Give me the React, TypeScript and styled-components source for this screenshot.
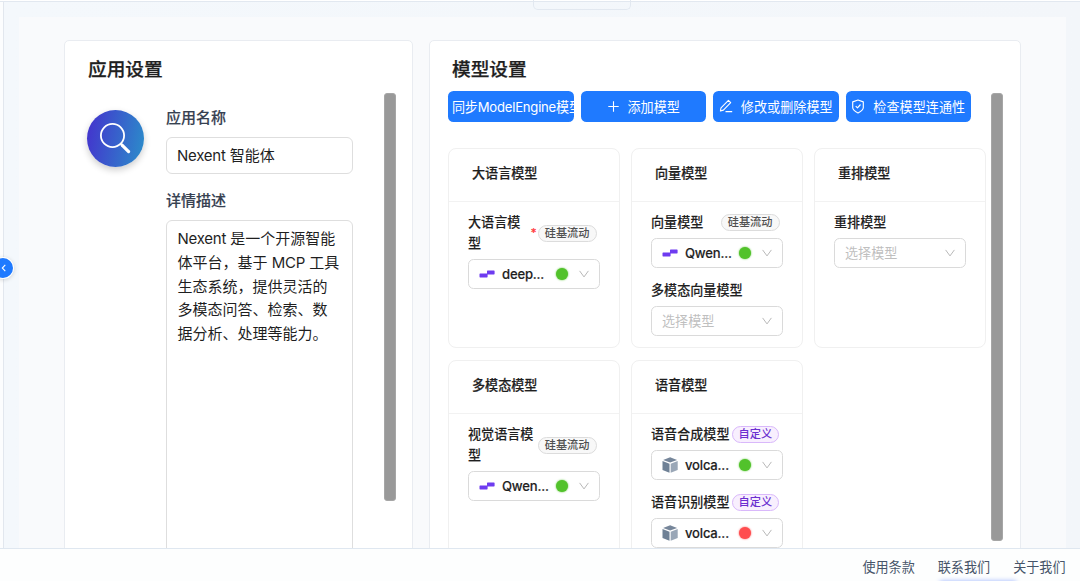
import React from "react";
import styled, { createGlobalStyle } from "styled-components";

const GlobalStyle = createGlobalStyle`
  * { box-sizing: border-box; }
  body {
    margin: 0;
    overflow: hidden;
    font-family: Inter, "Noto Sans CJK SC", sans-serif;
    color: #1f1f1f;
    background: #fff;
  }
`;

const Page = styled.div`
  position: relative;
  width: 1080px;
  height: 581px;
  display: flex;
  flex-direction: column;
  overflow: hidden;
  background: #fff;
`;

const TopEdge = styled.div`
  flex: none;
  height: 2px;
  border-bottom: 1px solid #e2e8f0;
`;

const Workspace = styled.div`
  flex: 1;
  min-height: 0;
  display: flex;
`;

const Rail = styled.aside`
  flex: none;
  width: 4px;
  background: #fcfdfe;
  border-right: 1px solid #e2e7ee;
`;

const Backdrop = styled.main`
  flex: 1;
  min-width: 0;
  padding: 15px 14px 0 15px;
  background: linear-gradient(90deg, #f4f8fc, #f3f6fa);
  overflow: hidden;
`;

const Content = styled.div`
  height: 531px;
  padding: 23px 45px 0 45px;
  display: flex;
  gap: 16px;
  background: #f9fafc;
  overflow: hidden;
`;

const Panel = styled.section<{ $width: number; $pad: number }>`
  flex: none;
  width: ${(p) => p.$width}px;
  height: 560px;
  padding: 0 0 0 ${(p) => p.$pad}px;
  border: 1px solid #e9ecf1;
  border-radius: 5px;
  background: #fff;
  display: flex;
`;

const PanelMain = styled.div<{ $width: number }>`
  flex: none;
  width: ${(p) => p.$width}px;
`;

const PanelTitle = styled.h2<{ $indent?: number }>`
  margin: 15px 0 0 ${(p) => p.$indent ?? 0}px;
  font-size: 18.7px;
  line-height: 28px;
  font-weight: 500;
  -webkit-text-stroke: 0.25px currentColor;
`;

const ScrollThumb = styled.div<{ $left: number; $height: number }>`
  flex: none;
  margin: 52px 0 0 ${(p) => p.$left}px;
  width: 12px;
  height: ${(p) => p.$height}px;
  border-radius: 3px;
  border: 1px solid #a6a6a6;
  background: #999;
`;

const AppRow = styled.div`
  margin-top: 22px;
  display: flex;
  gap: 22px;
`;

const Avatar = styled.div`
  flex: none;
  margin-top: 4px;
  width: 57px;
  height: 57px;
  border-radius: 50%;
  background: linear-gradient(100deg, #4335cd 5%, #2c8aca 95%);
  box-shadow: 0 3px 7px rgba(0, 0, 0, 0.2);
`;

const Fields = styled.div`
  width: 187px;
`;

const FieldLabel = styled.label`
  display: block;
  height: 24px;
  font-size: 15px;
  line-height: 24px;
  font-weight: 500;
  color: #374151;
  -webkit-text-stroke: 0.15px currentColor;
`;

const NameInput = styled.div`
  margin: 7px 0 15px;
  height: 37px;
  padding: 0 10px;
  border: 1px solid #dedede;
  border-radius: 6px;
  font-size: 15px;
  line-height: 36px;
`;

const Latin = styled.span`
  letter-spacing: -0.25px;
`;

const Description = styled.div`
  margin-top: 7px;
  height: 400px;
  padding: 6px 10.5px;
  border: 1px solid #dedede;
  border-radius: 6px;
  font-size: 15px;
  line-height: 23.75px;
  white-space: nowrap;
`;

const Actions = styled.div`
  margin-top: 7px;
  width: 523px;
  display: grid;
  grid-template-columns: repeat(4, minmax(0, 1fr));
  gap: 7px;
`;

const ActionButton = styled.button<{ $clip?: boolean }>`
  height: 31px;
  margin: 0;
  padding: 0 ${(p) => (p.$clip ? 4 : 0)}px 1px;
  border: 0;
  border-radius: 5.5px;
  display: flex;
  align-items: center;
  justify-content: ${(p) => (p.$clip ? "flex-start" : "center")};
  gap: 8px;
  background: #1f7aff;
  color: #fff;
  font: 400 13.1px Inter, "Noto Sans CJK SC", sans-serif;
  letter-spacing: ${(p) => (p.$clip ? "-0.22px" : "0.03px")};
  white-space: nowrap;
  overflow: hidden;
`;

const ModelGrid = styled.div`
  margin-top: 26px;
  display: grid;
  grid-template-columns: repeat(3, 172px);
  grid-auto-rows: 200px;
  gap: 12px 11px;
`;

const Card = styled.article`
  border: 1px solid #f0f0f0;
  border-radius: 8px;
  background: #fff;
`;

const CardHead = styled.h3`
  margin: 0;
  height: 53px;
  padding: 0 23px;
  border-bottom: 1px solid #f2f2f2;
  font-size: 13.1px;
  line-height: 49px;
  font-weight: 500;
  -webkit-text-stroke: 0.2px currentColor;
`;

const CardBody = styled.div`
  padding: 10px 19px 0;
`;

const ModelField = styled.div`
  margin-bottom: 12px;
`;

const ModelLabel = styled.div`
  display: flex;
  align-items: center;
  font-size: 13.1px;
  line-height: 21px;
  font-weight: 500;
  margin-bottom: 5px;
  -webkit-text-stroke: 0.1px currentColor;
`;

const LabelText = styled.span<{ $width?: number }>`
  width: ${(p) => (p.$width ? `${p.$width}px` : "auto")};
  white-space: ${(p) => (p.$width ? "normal" : "nowrap")};
`;

const Required = styled.span`
  margin-left: auto;
  color: #ff3b3f;
  font-size: 12px;
  position: relative;
  top: -1px;
  left: 1px;
`;

const Tag = styled.span<{ $custom?: boolean; $auto?: boolean }>`
  flex: none;
  margin-left: ${(p) => (p.$auto ? "auto" : "2px")};
  margin-right: 3.5px;
  height: 17px;
  padding: 0 6px;
  border: 1px solid ${(p) => (p.$custom ? "#d9b8fb" : "#dcdcdc")};
  border-radius: 9px;
  background: ${(p) => (p.$custom ? "#f8effe" : "#f8f8f8")};
  color: ${(p) => (p.$custom ? "#6b2fd0" : "#505050")};
  font-size: 11.2px;
  line-height: 15px;
  font-weight: 500;
  -webkit-text-stroke: 0;
`;

const SelectBox = styled.div`
  height: 30px;
  width: 132px;
  padding: 0 9px 0 10px;
  border: 1px solid #dadada;
  border-radius: 5.5px;
  display: flex;
  align-items: center;
  font-size: 13.1px;
`;

const Placeholder = styled.span`
  flex: 1;
  padding-bottom: 2px;
  color: #bfbfbf;
`;

const ModelName = styled.span`
  flex: 1;
  margin-left: 6px;
  font-weight: 500;
  letter-spacing: -0.2px;
  -webkit-text-stroke: 0.15px currentColor;
`;

const StatusDot = styled.i<{ $color: string }>`
  width: 12px;
  height: 12px;
  margin-right: 10px;
  border-radius: 50%;
  background: ${(p) => p.$color};
  box-shadow: 0 0 2px ${(p) => p.$color};
`;

const Footer = styled.footer`
  flex: none;
  height: 33px;
  padding: 0 14.5px;
  border-top: 1px solid #dfe7f0;
  display: flex;
  justify-content: flex-end;
  gap: 23px;
  background: #fdfefe;
  color: #475569;
  font-size: 13.1px;
  line-height: 37px;
`;

const StepperEdge = styled.div`
  position: absolute;
  top: 0;
  left: 533px;
  width: 98px;
  height: 10px;
  border: 1px solid #e2e8f0;
  border-top: 0;
  border-radius: 0 0 5px 5px;
`;

const RailToggle = styled.button`
  position: absolute;
  left: -7.5px;
  top: 258px;
  width: 20px;
  height: 20px;
  padding: 0;
  border: 0;
  border-radius: 50%;
  display: grid;
  place-items: center;
  background: #1f7aff;
  box-shadow: 0 0 0 1px #fff, 0 1px 4px 1px rgba(0, 0, 0, 0.16);
`;

const FooterGlow = styled.div`
  position: absolute;
  left: 940px;
  bottom: -7px;
  width: 76px;
  height: 7px;
  box-shadow: 0 0 5px #9db5ff;
`;

const SearchGlyph = () => (
  <svg width="57" height="57" viewBox="0 0 57 57" fill="none" stroke="#fff">
    <circle cx="25.5" cy="25.5" r="11.6" strokeWidth="1.8" />
    <path d="m33.7 33.7 2 2" strokeWidth="2" />
    <path d="m35.3 35.3 6.3 6.3" strokeWidth="3.2" strokeLinecap="round" />
  </svg>
);

const Chevron = () => (
  <svg width="12" height="12" viewBox="0 0 12 12" fill="none" stroke="#b9b9b9" strokeWidth="1">
    <path d="m1.6 2.9 4.4 6 4.4-6" />
  </svg>
);

const PlusGlyph = () => (
  <svg width="13" height="13" viewBox="0 0 13 13" stroke="#fff" strokeWidth="1.1">
    <path d="M6.5 1.3v10.4M1.3 6.5h10.4" />
  </svg>
);

const EditGlyph = () => (
  <svg width="14" height="14" viewBox="0 0 14 14" fill="none" stroke="#fff" strokeWidth="1.1" strokeLinejoin="round">
    <path d="m1.4 12 .6-3.2 7.4-7.4 2.3 2.3-7.3 7.4ZM6.5 12.6h6.7" />
  </svg>
);

const ShieldGlyph = () => (
  <svg width="14" height="15" viewBox="0 0 14 15" fill="none" stroke="#fff" strokeWidth="1.15" strokeLinejoin="round">
    <path d="M7 1 12.3 2.9v5.6c0 2.4-2.7 4.2-5.3 5.5-2.6-1.3-5.3-3.1-5.3-5.5V2.9Z" />
    <path d="m4.7 7.1 1.8 1.8 3-3.4" />
  </svg>
);

const FlowMark = () => (
  <svg width="17" height="16" viewBox="0 0 17 16" fill="#6e3bf0">
    <path d="M8.6 4.6h6.4q.6 0 .6.6v2.6q0 .6-.6.6H8.6v2.4q0 .6-.6.6H1.1q-.6 0-.6-.6V8.2q0-.6.6-.6h6.9V5.2q0-.6.6-.6Z" />
  </svg>
);

const CubeMark = () => (
  <svg width="17" height="16" viewBox="0 0 17 16">
    <g transform="translate(-.4 0)">
      <path d="m8.5.3 7 2.6-7 2.7-7-2.7Z" fill="#76869a" />
      <path d="m.9 4 7 2.8v8.9l-7-2.8Z" fill="#6f8196" />
      <path d="m16.1 4-7 2.8v8.9l7-2.8Z" fill="#9aa7b7" />
    </g>
  </svg>
);

type FieldData = {
  label: string;
  wrap?: number;
  required?: boolean;
  tag?: string;
  model?: string;
  mark?: "flow" | "cube";
  ok?: boolean;
};

const groups: { title: string; fields: FieldData[] }[] = [
  {
    title: "大语言模型",
    fields: [{ label: "大语言模型", wrap: 54, required: true, tag: "硅基流动", model: "deep...", mark: "flow", ok: true }],
  },
  {
    title: "向量模型",
    fields: [
      { label: "向量模型", tag: "硅基流动", model: "Qwen...", mark: "flow", ok: true },
      { label: "多模态向量模型" },
    ],
  },
  { title: "重排模型", fields: [{ label: "重排模型" }] },
  {
    title: "多模态模型",
    fields: [{ label: "视觉语言模型", wrap: 67, tag: "硅基流动", model: "Qwen...", mark: "flow", ok: true }],
  },
  {
    title: "语音模型",
    fields: [
      { label: "语音合成模型", tag: "自定义", model: "volca...", mark: "cube", ok: true },
      { label: "语音识别模型", tag: "自定义", model: "volca...", mark: "cube", ok: false },
    ],
  },
];

const ModelSelect = ({ field }: { field: FieldData }) => (
  <ModelField>
    <ModelLabel>
      <LabelText $width={field.wrap}>{field.label}</LabelText>
      {field.required && <Required>*</Required>}
      {field.tag && (
        <Tag $custom={field.tag === "自定义"} $auto={!field.required && field.tag !== "自定义"}>
          {field.tag}
        </Tag>
      )}
    </ModelLabel>
    <SelectBox>
      {field.model ? (
        <>
          {field.mark === "flow" ? <FlowMark /> : <CubeMark />}
          <ModelName>{field.model}</ModelName>
          <StatusDot $color={field.ok ? "#52c22b" : "#ff4d4f"} />
        </>
      ) : (
        <Placeholder>选择模型</Placeholder>
      )}
      <Chevron />
    </SelectBox>
  </ModelField>
);

export default function App() {
  return (
    <Page>
      <GlobalStyle />
      <TopEdge />
      <Workspace>
        <Rail />
        <Backdrop>
          <Content>
            <Panel $width={349} $pad={22}>
              <PanelMain $width={266}>
                <PanelTitle $indent={1}>应用设置</PanelTitle>
                <AppRow>
                  <Avatar><SearchGlyph /></Avatar>
                  <Fields>
                    <FieldLabel>应用名称</FieldLabel>
                    <NameInput><Latin>Nexent</Latin> 智能体</NameInput>
                    <FieldLabel>详情描述</FieldLabel>
                    <Description>
                      <Latin>Nexent</Latin> 是一个开源智能<br />
                      体平台，基于 <Latin>MCP</Latin> 工具<br />
                      生态系统，提供灵活的<br />
                      多模态问答、检索、数<br />
                      据分析、处理等能力。
                    </Description>
                  </Fields>
                </AppRow>
              </PanelMain>
              <ScrollThumb $left={31} $height={408} />
            </Panel>
            <Panel $width={592} $pad={18}>
              <PanelMain $width={538}>
                <PanelTitle $indent={4}>模型设置</PanelTitle>
                <Actions>
                  <ActionButton $clip>同步ModelEngine模型</ActionButton>
                  <ActionButton><PlusGlyph />添加模型</ActionButton>
                  <ActionButton><EditGlyph />修改或删除模型</ActionButton>
                  <ActionButton><ShieldGlyph />检查模型连通性</ActionButton>
                </Actions>
                <ModelGrid>
                  {groups.map((group) => (
                    <Card key={group.title}>
                      <CardHead>{group.title}</CardHead>
                      <CardBody>
                        {group.fields.map((field) => (
                          <ModelSelect key={field.label} field={field} />
                        ))}
                      </CardBody>
                    </Card>
                  ))}
                </ModelGrid>
              </PanelMain>
              <ScrollThumb $left={5} $height={448} />
            </Panel>
          </Content>
        </Backdrop>
      </Workspace>
      <Footer>
        <span>使用条款</span>
        <span>联系我们</span>
        <span>关于我们</span>
      </Footer>
      <StepperEdge />
      <RailToggle>
        <svg width="20" height="20" viewBox="0 0 20 20" fill="none" stroke="#fff" strokeWidth="1.1">
          <path d="m12.3 6.9-3 3.1 3 3.1" />
        </svg>
      </RailToggle>
      <FooterGlow />
    </Page>
  );
}
